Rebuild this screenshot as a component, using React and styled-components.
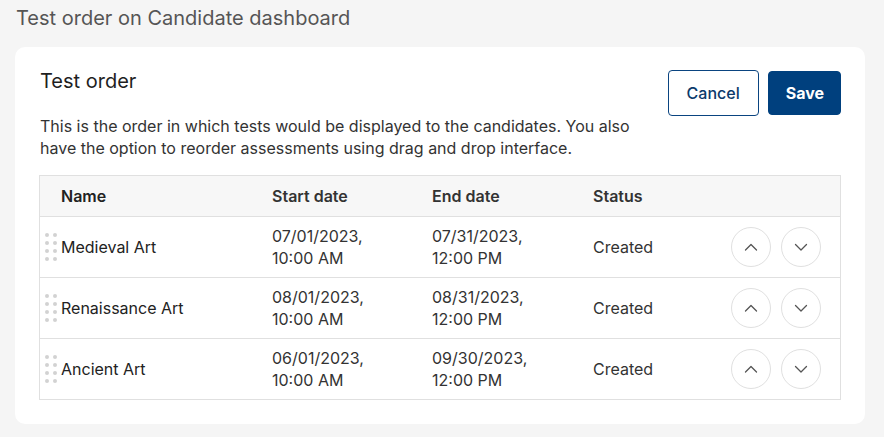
import styled, { createGlobalStyle } from 'styled-components'

const Global = createGlobalStyle`
  body {
    margin: 0;
    background: #f5f5f5;
    font-family: Inter, "Noto Sans", sans-serif;
    color: #333;
  }
`

const Page = styled.div`
  padding: 4px 19px 13px 15px;
`

const PageTitle = styled.h1`
  margin: 0 0 15px 1px;
  font-size: 20px;
  font-weight: 400;
  line-height: 28px;
  color: #555;
`

const Card = styled.div`
  background: #fff;
  border-radius: 10px;
  padding: 20px 24px 24px 24px;
`

const Top = styled.div`
  display: flex;
  justify-content: space-between;
  align-items: flex-start;
`

const Heading = styled.h2`
  margin: 0 0 20px 1px;
  font-size: 20px;
  font-weight: 400;
  line-height: 28px;
  color: #1f1f1f;
`

const Desc = styled.p`
  margin: 0 0 0 1px;
  font-size: 16px;
  line-height: 22px;
  color: #333;
  width: 612px;
`

const Actions = styled.div`
  display: flex;
  align-items: center;
  gap: 9px;
  margin-top: 3px;
`

const Button = styled.button`
  height: ${p => (p.$primary ? '44px' : '46px')};
  padding: 0 ${p => (p.$primary ? '16px 0 17px' : '18px')};
  border-radius: 4px;
  font-family: inherit;
  font-size: 16px;
  border: 1px solid ${p => (p.$primary ? '#00407e' : '#0a4480')};
  background: ${p => (p.$primary ? '#00407e' : '#fff')};
  color: ${p => (p.$primary ? '#fff' : '#0b3a6b')};
  font-weight: ${p => (p.$primary ? 700 : 500)};
  cursor: pointer;
`

const Table = styled.div`
  margin-top: 16px;
  border: 1px solid #e0e0e0;
`

const Row = styled.div`
  display: grid;
  grid-template-columns: 232px 160px 161px 120px 1fr;
  align-items: center;
  height: ${p => (p.$head ? '40px' : '60px')};
  background: ${p => (p.$head ? '#f7f7f7' : '#fff')};
  border-top: ${p => (p.$first ? 'none' : '1px solid #e0e0e0')};
  font-size: 16px;
  line-height: 22px;
  color: #333;
  font-weight: ${p => (p.$head ? 600 : 400)};
  padding-right: 19px;
`

const NameCell = styled.div`
  display: flex;
  align-items: center;
  padding-left: ${p => (p.$head ? '21px' : '5px')};
  color: #222;
`

const Handle = styled.div`
  display: grid;
  grid-template-columns: 4px 4px;
  grid-auto-rows: 4px;
  column-gap: 4px;
  row-gap: 4px;
  margin-right: 4px;
  span {
    width: 4px;
    height: 4px;
    border-radius: 50%;
    background: #d2d2d2;
  }
`

const Cell = styled.div`
  color: #333;
`

const Arrows = styled.div`
  display: flex;
  justify-content: flex-end;
  gap: 10px;
`

const Round = styled.button`
  width: 40px;
  height: 40px;
  border-radius: 50%;
  border: 1px solid #e0e0e0;
  background: #fff;
  display: flex;
  align-items: center;
  justify-content: center;
  padding: 0;
  cursor: pointer;
`

const Chevron = ({ up }) => (
  <svg width="14" height="14" viewBox="0 0 14 14" fill="none" stroke="#555" strokeWidth="1.3" strokeLinecap="round" strokeLinejoin="round">
    {up ? <path d="M1.5 10L7 4.5l5.5 5.5" /> : <path d="M1.5 4.5L7 10l5.5-5.5" />}
  </svg>
)

const rows = [
  { name: 'Medieval Art', start: ['07/01/2023,', '10:00 AM'], end: ['07/31/2023,', '12:00 PM'] },
  { name: 'Renaissance Art', start: ['08/01/2023,', '10:00 AM'], end: ['08/31/2023,', '12:00 PM'] },
  { name: 'Ancient Art', start: ['06/01/2023,', '10:00 AM'], end: ['09/30/2023,', '12:00 PM'] },
]

export default function App() {
  return (
    <Page>
      <Global />
      <PageTitle>Test order on Candidate dashboard</PageTitle>
      <Card>
        <Top>
          <div>
            <Heading>Test order</Heading>
            <Desc>
              This is the order in which tests would be displayed to the candidates. You also have the option to
              reorder assessments using drag and drop interface.
            </Desc>
          </div>
          <Actions>
            <Button>Cancel</Button>
            <Button $primary>Save</Button>
          </Actions>
        </Top>
        <Table>
          <Row $head $first>
            <NameCell $head>Name</NameCell>
            <Cell>Start date</Cell>
            <Cell>End date</Cell>
            <Cell>Status</Cell>
            <div />
          </Row>
          {rows.map(r => (
            <Row key={r.name}>
              <NameCell>
                <Handle>
                  {Array.from({ length: 8 }).map((_, i) => (
                    <span key={i} />
                  ))}
                </Handle>
                {r.name}
              </NameCell>
              <Cell>
                {r.start[0]}
                <br />
                {r.start[1]}
              </Cell>
              <Cell>
                {r.end[0]}
                <br />
                {r.end[1]}
              </Cell>
              <Cell>Created</Cell>
              <Arrows>
                <Round aria-label="Move up">
                  <Chevron up />
                </Round>
                <Round aria-label="Move down">
                  <Chevron />
                </Round>
              </Arrows>
            </Row>
          ))}
        </Table>
      </Card>
    </Page>
  )
}
